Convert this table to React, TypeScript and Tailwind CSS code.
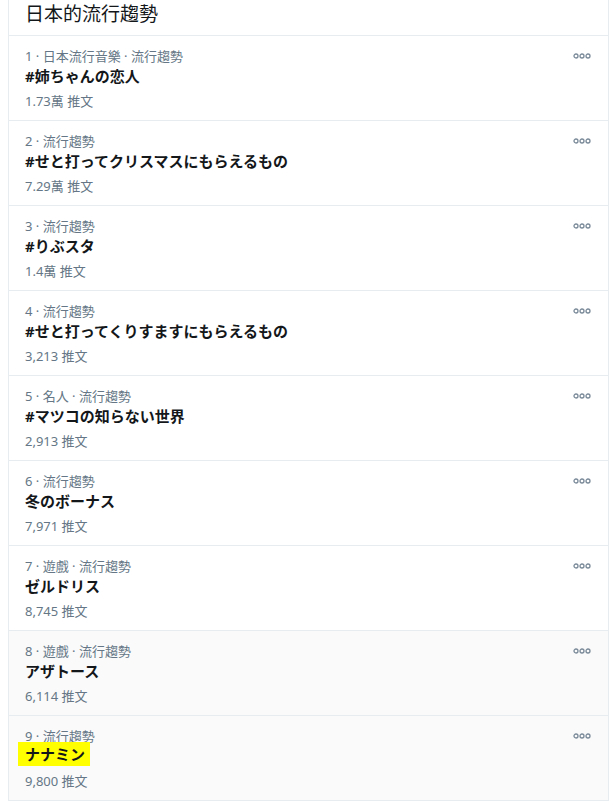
import React from "react";

type Trend = {
  rank: number;
  context: string;
  title: string;
  count: string;
  hover?: boolean;
  highlight?: boolean;
};

const trends: Trend[] = [
  { rank: 1, context: "日本流行音樂 · 流行趨勢", title: "#姉ちゃんの恋人", count: "1.73萬 推文" },
  { rank: 2, context: "流行趨勢", title: "#せと打ってクリスマスにもらえるもの", count: "7.29萬 推文" },
  { rank: 3, context: "流行趨勢", title: "#りぶスタ", count: "1.4萬 推文" },
  { rank: 4, context: "流行趨勢", title: "#せと打ってくりすますにもらえるもの", count: "3,213 推文" },
  { rank: 5, context: "名人 · 流行趨勢", title: "#マツコの知らない世界", count: "2,913 推文" },
  { rank: 6, context: "流行趨勢", title: "冬のボーナス", count: "7,971 推文" },
  { rank: 7, context: "遊戲 · 流行趨勢", title: "ゼルドリス", count: "8,745 推文" },
  { rank: 8, context: "遊戲 · 流行趨勢", title: "アザトース", count: "6,114 推文", hover: true },
  { rank: 9, context: "流行趨勢", title: "ナナミン", count: "9,800 推文", hover: true, highlight: true },
];

const font = {
  fontFamily: '"Noto Sans", "Noto Sans CJK JP", "Noto Sans CJK TC", sans-serif',
};

function MoreIcon() {
  return (
    <svg width="18" height="6" viewBox="0 0 18 6" className="text-[#7a8a99]">
      <circle cx="3" cy="3" r="2" fill="none" stroke="currentColor" strokeWidth="1.3" />
      <circle cx="9" cy="3" r="2" fill="none" stroke="currentColor" strokeWidth="1.3" />
      <circle cx="15" cy="3" r="2" fill="none" stroke="currentColor" strokeWidth="1.3" />
    </svg>
  );
}

function TrendRow({ t }: { t: Trend }) {
  return (
    <div
      className={`h-[85px] border-b border-[#e6ecf0] pl-4 pr-4 pt-[10px] ${t.hover ? "bg-[#fafafa]" : "bg-white"}`}
    >
      <div className="flex items-start justify-between">
        <div className="flex flex-col">
          <div className="h-[20px] text-[13px] leading-[20px] text-[#657786]">
            {t.rank} · {t.context}
          </div>
          <div className="h-[21px] leading-[21px]">
            {t.highlight ? (
              <span className="-ml-[7px] -mt-[4px] inline-block h-[24px] bg-[#ffff00] pl-[7px] pr-[5px] align-top text-[15px] font-bold leading-[24px] text-[#14171a]">
                {t.title}
              </span>
            ) : (
              <span className="text-[15px] font-bold text-[#14171a]">{t.title}</span>
            )}
          </div>
          <div className="mt-[5px] h-[18px] text-[13px] leading-[18px] text-[#657786]">
            {t.count}
          </div>
        </div>
        <div className="mt-[7px] mr-[1px]">
          <MoreIcon />
        </div>
      </div>
    </div>
  );
}

export default function App() {
  return (
    <div className="h-[808px] w-[616px] overflow-hidden bg-white" style={font}>
      <div className="ml-[8px] w-[601px] border-l border-r border-[#e6ecf0] bg-white">
        <div className="h-[36px] border-b border-[#e6ecf0] pl-4 pt-[1px]">
          <div className="text-[19px] leading-[26px] text-[#14171a]">日本的流行趨勢</div>
        </div>
        {trends.map((t) => (
          <TrendRow key={t.rank} t={t} />
        ))}
      </div>
    </div>
  );
}
